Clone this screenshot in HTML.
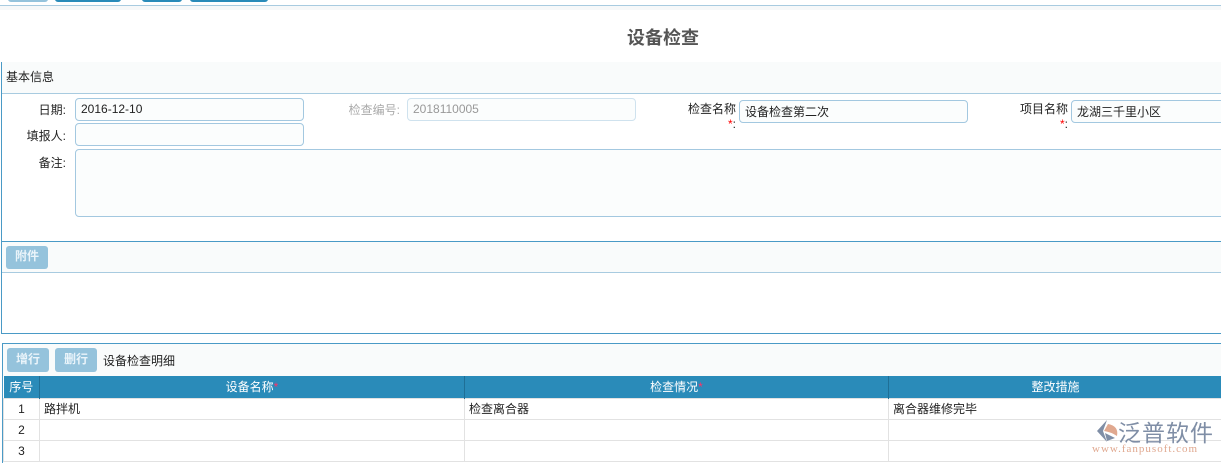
<!DOCTYPE html>
<html><head><meta charset="utf-8"><style>
*{box-sizing:border-box;margin:0;padding:0}
body{width:1221px;height:462px;overflow:hidden;background:#fff;font-family:"Liberation Sans","Noto Sans CJK SC",sans-serif;font-size:12px;color:#222;position:relative}
.a{position:absolute}
.btn{position:absolute;background:#95c3dc;color:#eaf4fa;border-radius:3px;font-size:12px;text-align:center;font-weight:bold}
.inp{position:absolute;border:1px solid #a3c8e0;border-radius:4px;background:#fbfdfd;height:23px;padding:3px 5px;font-size:12px}
.lbl{position:absolute;text-align:right;font-size:12px}
table{border-collapse:collapse;position:absolute;left:3px;top:376px;width:1220px}
th{background:#2a8bb9;color:#fff;font-weight:normal;height:22px;border-right:1px solid #1f6f96;font-size:12px}
td{height:21px;border:1px solid #e2e2e2;padding-left:4px}
</style></head><body>
<div class="a" style="left:8px;top:-6px;width:40px;height:8px;background:#95c3dc;border-radius:3px"></div>
<div class="a" style="left:55px;top:-6px;width:66px;height:8px;background:#2a8bb9;border-radius:3px"></div>
<div class="a" style="left:142px;top:-6px;width:40px;height:8px;background:#2a8bb9;border-radius:3px"></div>
<div class="a" style="left:190px;top:-6px;width:78px;height:8px;background:#2a8bb9;border-radius:3px"></div>
<div class="a" style="left:0;top:5px;width:1221px;height:1px;background:#a8cbe0"></div>
<div class="a" style="left:0;top:6px;width:1221px;height:4px;background:#f6f8f9"></div>
<div class="a" style="left:0;top:24px;width:1326px;text-align:center;font-size:18px;font-weight:bold;color:#555">设备检查</div>

<div class="a" style="left:1px;top:62px;width:1222px;height:272px;border:1px solid #4a9ac6;border-top:none;border-right:none"></div>
<div class="a" style="left:2px;top:62px;width:1219px;height:32px;background:#f9fbfb;border-bottom:1px solid #a8cbe0"></div>
<div class="a" style="left:6px;top:68px">基本信息</div>
<div class="lbl" style="left:0;top:101px;width:66px">日期:</div>
<div class="inp" style="left:75px;top:98px;width:229px">2016-12-10</div>
<div class="lbl" style="left:320px;top:101px;width:80px;color:#aaa">检查编号:</div>
<div class="inp" style="left:407px;top:98px;width:229px;color:#999;border-color:#cfe2ee">2018110005</div>
<div class="lbl" style="left:660px;top:100px;width:76px">检查名称<br><span style="color:red">*</span>:</div>
<div class="inp" style="left:739px;top:100px;width:229px;line-height:16px">设备检查第二次</div>
<div class="lbl" style="left:990px;top:100px;width:78px">项目名称<br><span style="color:red">*</span>:</div>
<div class="inp" style="left:1071px;top:100px;width:160px;line-height:16px">龙湖三千里小区</div>
<div class="lbl" style="left:0;top:127px;width:66px">填报人:</div>
<div class="inp" style="left:75px;top:123px;width:229px"></div>
<div class="lbl" style="left:0;top:154px;width:66px">备注:</div>
<div class="inp" style="left:75px;top:149px;width:1160px;height:68px"></div>
<div class="a" style="left:2px;top:241px;width:1219px;height:1px;background:#4a9ac6"></div>
<div class="a" style="left:2px;top:242px;width:1219px;height:31px;background:#f9fbfb;border-bottom:1px solid #a8cbe0"></div>
<div class="btn" style="left:6px;top:246px;width:42px;height:23px;line-height:21px">附件</div>

<div class="a" style="left:2px;top:343px;width:1222px;height:120px;border:1px solid #4a9ac6;border-right:none;border-bottom:none"></div>
<div class="a" style="left:3px;top:344px;width:1218px;height:32px;background:#f9fbfb"></div>
<div class="btn" style="left:7px;top:348px;width:42px;height:24px;line-height:22px">增行</div>
<div class="btn" style="left:55px;top:348px;width:42px;height:24px;line-height:22px">删行</div>
<div class="a" style="left:103px;top:352px">设备检查明细</div>
<table>
<tr><th style="width:36px">序号</th><th style="width:425px">设备名称<span style="color:#f36">*</span></th><th style="width:424px">检查情况<span style="color:#f36">*</span></th><th>整改措施</th></tr>
<tr><td style="text-align:center;padding:0">1</td><td>路拌机</td><td>检查离合器</td><td>离合器维修完毕</td></tr>
<tr><td style="text-align:center;padding:0">2</td><td></td><td></td><td></td></tr>
<tr><td style="text-align:center;padding:0">3</td><td></td><td></td><td></td></tr>
</table>
<svg class="a" style="left:1093px;top:418px" width="30" height="26" viewBox="0 0 30 26"><path d="M14 2 L4 13 L14 24 L10 13 Z" fill="#7f8ea6"/><path d="M15 6 Q26 8 24 18 Q18 14 11 13 Z" fill="#e0a88f"/><path d="M12 15 L22 20 L14 23 Z" fill="#7f8ea6"/></svg>
<div class="a" style="left:1118px;top:414px;font-size:23px;color:#7f8ea6;letter-spacing:1px">泛普软件</div>
<div class="a" style="left:1092px;top:443px;font-size:11px;color:#e0a88f;font-family:'Liberation Serif',serif;letter-spacing:1px">www.fanpusoft.com</div>
</body></html>
